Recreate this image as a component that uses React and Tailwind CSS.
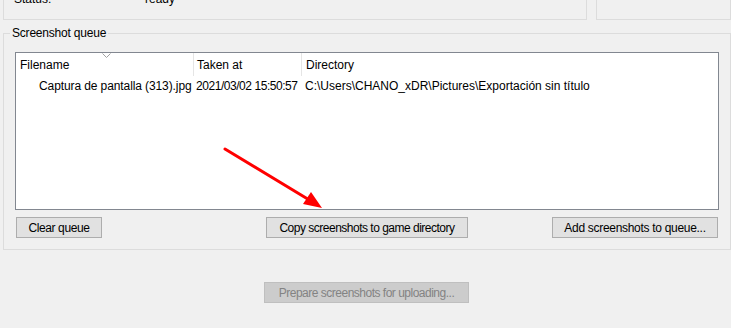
export default function App() {
  const font = { fontFamily: '"Liberation Sans", Arial, sans-serif' };
  const btn = "h-[21px] border border-[#adadad] bg-[#e1e1e1] text-[12px] leading-[16px] whitespace-nowrap";
  return (
    <div className="relative w-[731px] h-[328px] overflow-hidden bg-[#f0f0f0] text-[12px] leading-[16px] text-black" style={font}>
      {/* top group boxes (cut off) */}
      <div className="flex h-[20px] pl-[3px] gap-[9px]">
        <div className="w-[584px] h-[20px] border-x border-b border-[#dcdcdc] flex items-end">
          <div className="flex -mb-[1px] h-[16px] translate-y-[-13px] whitespace-nowrap">
            <span className="ml-[10px] w-[131px]">Status:</span>
            <span>ready</span>
          </div>
        </div>
        <div className="w-[135px] h-[20px] border-x border-b border-[#dcdcdc]" />
      </div>

      {/* Screenshot queue group */}
      <div className="relative ml-[3px] mt-[13px] w-[728px] h-[217px] border border-[#dcdcdc]">
        <span className="absolute left-[6px] top-[-9px] bg-[#f0f0f0] px-[2px] leading-[16px] whitespace-nowrap tracking-[-0.2px]">Screenshot queue</span>
        <div className="ml-[11px] mt-[18px] w-[704px] h-[158px] border border-[#828790] bg-white">
          <div className="relative flex h-[23px]">
            <div className="w-[178px] h-full border-r border-[#e5e5e5] pl-[4px] pt-[4px]">Filename</div>
            <div className="w-[108px] h-full border-r border-[#e5e5e5] pl-[3px] pt-[4px]">Taken at</div>
            <div className="flex-1 pl-[4px] pt-[4px]">Directory</div>
            <svg className="absolute left-[86px] top-[0px]" width="9" height="5" viewBox="0 0 9 5">
              <path d="M0.5 0.5 L4.5 4.5 L8.5 0.5" fill="none" stroke="#a0a0a0" strokeWidth="1" />
            </svg>
          </div>
          <div className="flex h-[20px] items-center">
            <div className="w-[178px] pl-[23px] whitespace-nowrap overflow-hidden tracking-[-0.1px]">Captura de pantalla (313).jpg</div>
            <div className="w-[108px] pl-[2px] whitespace-nowrap overflow-hidden tracking-[-0.45px]">2021/03/02 15:50:57</div>
            <div className="flex-1 pl-[3px] whitespace-nowrap">C:\Users\CHANO_xDR\Pictures\Exportación sin título</div>
          </div>
        </div>
        <div className="flex ml-[12px] mt-[7px]">
          <button className={`w-[86px] ${btn} tracking-[-0.4px]`}>Clear queue</button>
          <button className={`ml-[164px] w-[202px] ${btn} tracking-[-0.5px]`}>Copy screenshots to game directory</button>
          <button className={`ml-[84px] w-[166px] ${btn} tracking-[-0.3px]`}>Add screenshots to queue...</button>
        </div>
      </div>

      <div className="ml-[264px] mt-[32px]">
        <button className="w-[205px] h-[21px] border border-[#bfbfbf] bg-[#cccccc] text-[#838383] text-[12px] leading-[16px] whitespace-nowrap tracking-[-0.5px]">Prepare screenshots for uploading...</button>
      </div>

      {/* red arrow annotation */}
      <svg className="absolute left-0 top-0 pointer-events-none" width="731" height="328">
        <line x1="225" y1="149" x2="311" y2="201" stroke="#ff0000" strokeWidth="3" strokeLinecap="round" />
        <polygon points="322,208 303,204 311,192" fill="#ff0000" />
      </svg>
    </div>
  );
}
